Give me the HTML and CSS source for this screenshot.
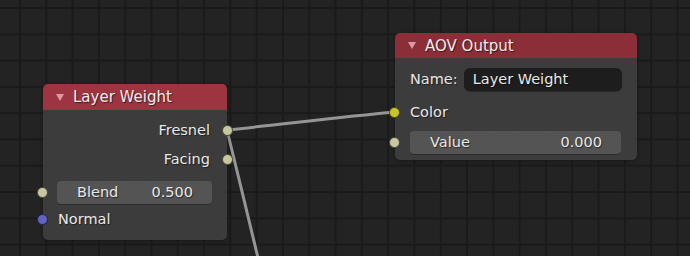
FILE: index.html
```html
<!DOCTYPE html>
<html>
<head>
<meta charset="utf-8">
<link rel="stylesheet" href="styles.css">
</head>
<body>
<div class="canvas">
  <svg class="wires" width="690" height="256" viewBox="0 0 690 256">
    <path class="wire" d="M227 130 C 285 124, 340 117, 395 112"/>
    <path class="wire" d="M227 130 C 237 170, 250 225, 259 262"/>
  </svg>

  <div class="node node-lw">
    <div class="node-header hdr-input">
      <svg class="tri" width="8" height="7" viewBox="0 0 8 7"><polygon points="0,0 8,0 4,7"/></svg>
      <span class="title">Layer Weight</span>
    </div>
    <div class="node-body lw-body">
      <div class="row out r-fresnel"><span>Fresnel</span><i class="sock sock-r grey"></i></div>
      <div class="row out r-facing"><span>Facing</span><i class="sock sock-r grey"></i></div>
      <div class="row r-blend">
        <i class="sock sock-l grey"></i>
        <div class="field num"><span>Blend</span><span>0.500</span></div>
      </div>
      <div class="row r-normal"><i class="sock sock-l blue"></i><span>Normal</span></div>
    </div>
  </div>

  <div class="node node-aov">
    <div class="node-header hdr-output">
      <svg class="tri" width="8" height="7" viewBox="0 0 8 7"><polygon points="0,0 8,0 4,7"/></svg>
      <span class="title">AOV Output</span>
    </div>
    <div class="node-body aov-body">
      <div class="row r-name"><span class="lbl">Name:</span><div class="field text">Layer Weight</div></div>
      <div class="row r-color"><i class="sock sock-l yellow"></i><span>Color</span></div>
      <div class="row r-value">
        <i class="sock sock-l grey"></i>
        <div class="field num"><span>Value</span><span>0.000</span></div>
      </div>
    </div>
  </div>
</div>
</body>
</html>
```

FILE: styles.css
```css
html, body {
  margin: 0;
  padding: 0;
  background: #232323;
}

.canvas {
  position: relative;
  width: 690px;
  height: 256px;
  overflow: hidden;
  background-color: #232323;
  background-image:
    linear-gradient(to right, #1a1a1a 0, #1a1a1a 2px, transparent 2px),
    linear-gradient(to bottom, #1a1a1a 0, #1a1a1a 2px, transparent 2px);
  background-size: 26.3px 26.3px, 26.3px 26.3px;
  background-position: 19px 0, 0 7px;
  font-family: "DejaVu Sans", "Liberation Sans", sans-serif;
  font-size: 14.5px;
  color: #e8e8e8;
}

.wires {
  position: absolute;
  left: 0;
  top: 0;
}

.wire {
  fill: none;
  stroke: #959595;
  stroke-width: 3;
  stroke-linecap: round;
}

.node {
  position: absolute;
  border-radius: 5px;
  box-shadow: 0 1px 4px rgba(0, 0, 0, 0.35);
}

.node-lw {
  left: 43px;
  top: 84px;
  width: 184px;
}

.node-aov {
  left: 395px;
  top: 33px;
  width: 242px;
}

.node-header {
  display: flex;
  align-items: center;
  height: 26px;
  padding-left: 13px;
  border-radius: 5px 5px 0 0;
  text-shadow: 1px 1px 1px rgba(0, 0, 0, 0.55);
}

.node-aov .node-header {
  height: 25px;
}

.hdr-input {
  background: #9d3440;
}

.hdr-output {
  background: #8c2e37;
}

.tri {
  fill: #d99aa0;
  margin-right: 9px;
  flex: none;
}

.title {
  font-size: 15px;
  color: #ececec;
}

.node-body {
  background: rgba(62, 62, 62, 0.93);
  border-radius: 0 0 5px 5px;
  display: flex;
  flex-direction: column;
  text-shadow: 1px 1px 1px rgba(0, 0, 0, 0.5);
}

.lw-body {
  padding: 8px 15px 9px 15px;
}

.aov-body {
  padding: 9px 15px 6px 15px;
}

.row {
  position: relative;
  display: flex;
  align-items: center;
  height: 24px;
}

.row.out {
  justify-content: flex-end;
  padding-right: 2px;
}

.r-facing { margin-top: 5px; }
.r-blend { margin-top: 9px; }
.r-normal { margin-top: 3px; }
.r-color { margin-top: 9px; }
.r-value { margin-top: 6px; }

.sock {
  position: absolute;
  top: 50%;
  width: 9px;
  height: 9px;
  margin-top: -5.5px;
  border-radius: 50%;
  border: 1px solid rgba(0, 0, 0, 0.6);
}

.sock-r { right: -21px; }
.sock-l { left: -21px; }

.grey { background: #c7c7a0; }
.blue { background: #6363c7; }
.yellow { background: #c7c729; }

.field {
  flex: 1;
  height: 23px;
  border-radius: 4px;
  display: flex;
  align-items: center;
  box-sizing: border-box;
}

.field.num {
  background: #545454;
  justify-content: space-between;
  padding: 0 19px 0 20px;
  box-shadow: 0 1px 0 rgba(0, 0, 0, 0.25);
}

.r-blend .field { margin-left: -1px; }
.r-value .field { margin-right: 1px; }

.lbl {
  margin-right: 6px;
}

.field.text {
  background: #1d1d1d;
  padding-left: 9px;
  border-radius: 6px;
  box-shadow: 0 1px 0 rgba(0, 0, 0, 0.3);
}
```
